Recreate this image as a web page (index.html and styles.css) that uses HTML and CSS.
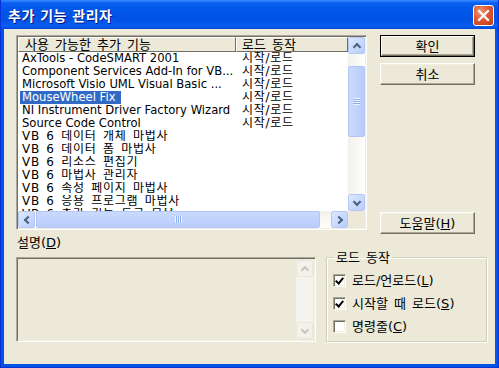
FILE: index.html
```html
<!DOCTYPE html>
<html lang="ko">
  <head>
    <meta charset="UTF-8" />
    <title>추가 기능 관리자</title>
    <link rel="stylesheet" href="styles.css">
  </head>
  <body>
    <div class="window">
      <div class="titlebar">
        <span class="title">추가 기능 관리자</span>
        <span class="close">
          <svg width="13" height="13" viewBox="0 0 13 13">
            <path d="M2 2 L11 11 M11 2 L2 11" stroke="#fff" stroke-width="2.2" stroke-linecap="square" />
          </svg>
        </span>
      </div>

      <div class="client">
        <div class="top">
          <div class="listbox">
            <div class="lv">
              <div class="lv-head">
                <div class="col c1">사용 가능한 추가 기능</div>
                <div class="col c2">로드 동작</div>
              </div>
              <div class="lv-body">
                <div class="row"><span class="c1 en">AxTools - CodeSMART 2001</span><span class="c2">시작/로드</span></div>
                <div class="row"><span class="c1 en">Component Services Add-In for VB...</span><span class="c2">시작/로드</span></div>
                <div class="row"><span class="c1 en">Microsoft Visio UML Visual Basic ...</span><span class="c2">시작/로드</span></div>
                <div class="row"><span class="c1 en"><span class="sel">MouseWheel Fix</span></span><span class="c2">시작/로드</span></div>
                <div class="row"><span class="c1 en">NI Instrument Driver Factory Wizard</span><span class="c2">시작/로드</span></div>
                <div class="row"><span class="c1 en">Source Code Control</span><span class="c2">시작/로드</span></div>
                <div class="row"><span class="c1">VB 6 데이터 개체 마법사</span></div>
                <div class="row"><span class="c1">VB 6 데이터 폼 마법사</span></div>
                <div class="row"><span class="c1">VB 6 리소스 편집기</span></div>
                <div class="row"><span class="c1">VB 6 마법사 관리자</span></div>
                <div class="row"><span class="c1">VB 6 속성 페이지 마법사</span></div>
                <div class="row"><span class="c1">VB 6 응용 프로그램 마법사</span></div>
                <div class="row"><span class="c1">VB 6 추가 기능 도구 모음</span></div>
              </div>
            </div>
            <div class="vscroll">
              <span class="sbtn up"></span>
              <span class="track">
                <span class="thumb v"><span class="grip"></span></span>
              </span>
              <span class="sbtn down"></span>
            </div>
            <div class="hscroll">
              <span class="sbtn left"></span>
              <span class="track">
                <span class="thumb h"><span class="grip"></span></span>
              </span>
              <span class="sbtn right"></span>
            </div>
            <div class="corner"></div>
          </div>

          <div class="buttons">
            <div class="btn default"><span>확인</span></div>
            <div class="btn">취소</div>
            <div class="spacer"></div>
            <div class="btn">도움말(<u>H</u>)</div>
          </div>
        </div>

        <div class="bottom">
          <div class="desc">
            <div class="desc-label">설명(<u>D</u>)</div>
            <div class="descbox">
              <div class="vscroll off">
                <span class="sbtn up"></span>
                <span class="track"></span>
                <span class="sbtn down"></span>
              </div>
            </div>
          </div>

          <fieldset class="group">
            <legend>로드 동작</legend>
            <div class="check"><span class="box on"></span><span>로드/언로드(<u>L</u>)</span></div>
            <div class="check"><span class="box on"></span><span>시작할 때 로드(<u>S</u>)</span></div>
            <div class="check"><span class="box"></span><span>명령줄(<u>C</u>)</span></div>
          </fieldset>
        </div>
      </div>
    </div>
  </body>
</html>
```

FILE: styles.css
```css
* {
    box-sizing: border-box;
}
body {
    margin: 0;
    width: 499px;
    height: 368px;
    overflow: hidden;
    font-family: "DejaVu Sans", "Noto Sans CJK KR", sans-serif;
    font-size: 13px;
    word-spacing: 2px;
    color: #000;
}
u {
    text-decoration: underline;
    text-underline-offset: 1px;
}

/* window frame */
.window {
    width: 499px;
    height: 368px;
    background: #0055e5;
    border: 1px solid #0831d9;
    border-top: none;
    padding: 0 3px 3px 3px;
    display: flex;
    flex-direction: column;
}
.titlebar {
    height: 29px;
    margin: 0 -3px;
    padding: 0 3px 0 7px;
    display: flex;
    align-items: center;
    justify-content: space-between;
    background: linear-gradient(to bottom, #3b8cff 0%, #0a5ff0 10%, #0056e8 35%, #0053e4 70%, #0a5ef2 90%, #0048d6 100%);
}
.title {
    color: #fff;
    font-family: "Noto Sans CJK KR", sans-serif;
    font-weight: bold;
    font-size: 14px;
    letter-spacing: 0.5px;
    word-spacing: 1px;
    text-shadow: 1px 1px #0a1883;
    margin-top: 1px;
}
.close {
    width: 21px;
    height: 21px;
    margin-right: 1px;
    margin-top: 1px;
    border: 1px solid #fff;
    border-radius: 3px;
    background: radial-gradient(circle at 35% 30%, #f0997a 0%, #dc5a36 45%, #c13b14 100%);
    display: flex;
    align-items: center;
    justify-content: center;
}

.client {
    flex: 1;
    background: #ece9d8;
    padding: 6px 8px 0 12px;
}

/* top area: list + buttons */
.top {
    display: flex;
    height: 195px;
}
.listbox {
    width: 351px;
    height: 195px;
    border: 1px solid;
    border-color: #aca899 #fff #fff #aca899;
    box-shadow: inset 1px 1px #716f64, inset -1px -1px #f1efe2;
    padding: 1px;
    background: #fff;
    display: grid;
    grid-template-columns: 1fr 17px;
    grid-template-rows: 1fr 17px;
}
.lv {
    overflow: hidden;
    background: #fff;
}
.lv-head {
    display: flex;
    height: 15px;
    line-height: 13px;
}
.lv-head .col {
    background: #ece9d8;
    border: 1px solid;
    border-color: #fff #716f64 #716f64 #fff;
    padding-left: 6px;
    white-space: nowrap;
    overflow: hidden;
}
.lv-head .c1 {
    width: 218px;
}
.lv-head .c2 {
    flex: 1;
    padding-left: 5px;
}
.row {
    display: flex;
    height: 13px;
    line-height: 13px;
    white-space: nowrap;
    font-size: 12px;
    letter-spacing: 0.7px;
}
.row .c1 {
    width: 218px;
    padding-left: 4px;
    overflow: hidden;
}
.row .c1.en {
    font-size: 11.6px;
    letter-spacing: 0;
    word-spacing: 0;
}
.row .c2 {
    padding-left: 6px;
}
.sel {
    background: #316ac5;
    color: #fff;
    margin-left: -2px;
    padding: 0 5px 0 2px;
    display: inline-block;
}

/* xp style scrollbars */
.vscroll,
.hscroll {
    display: flex;
    background: #fdfdfa;
}
.vscroll {
    flex-direction: column;
}
.track {
    flex: 1;
    display: flex;
    background: linear-gradient(to right, #f3f1ec, #fefefb);
}
.hscroll .track {
    background: linear-gradient(to bottom, #f3f1ec, #fefefb);
}
.sbtn {
    width: 17px;
    height: 17px;
    flex: none;
    border: 1px solid #b4c8f6;
    border-radius: 2px;
    background: linear-gradient(135deg, #dce8ff, #b9cdfb);
    position: relative;
}
.sbtn::after {
    content: "";
    position: absolute;
    width: 4px;
    height: 4px;
    left: 5px;
    top: 5px;
    border: solid #4d6185;
    border-width: 2px 2px 0 0;
}
.sbtn.up::after {
    transform: rotate(-45deg);
    top: 6px;
}
.sbtn.down::after {
    transform: rotate(135deg);
    top: 4px;
}
.sbtn.left::after {
    transform: rotate(-135deg);
    left: 6px;
}
.sbtn.right::after {
    transform: rotate(45deg);
    left: 4px;
}
.thumb {
    border: 1px solid #b1c6f5;
    border-radius: 2px;
    background: linear-gradient(to right, #cad9fd, #b9cdfb);
    display: flex;
    align-items: center;
    justify-content: center;
}
.thumb.v {
    width: 17px;
    height: 71px;
    margin-top: 12px;
}
.thumb.h {
    height: 17px;
    width: 284px;
    margin-left: 1px;
    background: linear-gradient(to bottom, #cad9fd, #b9cdfb);
}
.thumb.v .grip {
    width: 7px;
    height: 7px;
    background: repeating-linear-gradient(to bottom, #eef4fe 0 1px, #8caef0 1px 2px);
}
.thumb.h .grip {
    width: 7px;
    height: 7px;
    background: repeating-linear-gradient(to right, #eef4fe 0 1px, #8caef0 1px 2px);
}
.corner {
    background: #ece9d8;
}

/* buttons */
.buttons {
    margin-left: 13px;
    width: 95px;
    display: flex;
    flex-direction: column;
    gap: 6px;
}
.spacer {
    flex: 1;
}
.btn {
    height: 22px;
    background: #ece9d8;
    border: 1px solid;
    border-color: #fff #716f64 #716f64 #fff;
    box-shadow: inset -1px -1px #aca899, inset 1px 1px #f1efe2;
    display: flex;
    align-items: center;
    justify-content: center;
    line-height: 13px;
}
.btn.default {
    border: 1px solid #000;
    box-shadow: none;
    padding: 0;
}
.btn.default span {
    width: 100%;
    height: 100%;
    border: 1px solid;
    border-color: #fff #716f64 #716f64 #fff;
    box-shadow: inset -1px -1px #aca899;
    display: flex;
    align-items: center;
    justify-content: center;
}
.buttons .btn:last-child {
    margin-bottom: -4px;
}

/* bottom area */
.bottom {
    display: flex;
    margin-top: 6px;
}
.desc {
    width: 300px;
}
.desc-label {
    height: 13px;
    line-height: 13px;
    padding-left: 1px;
    margin-bottom: 8px;
}
.descbox {
    height: 85px;
    border: 1px solid;
    border-color: #aca899 #fff #fff #aca899;
    box-shadow: inset 1px 1px #716f64, inset -1px -1px #f1efe2;
    padding: 2px 2px 2px 0;
    display: flex;
    justify-content: flex-end;
}
.vscroll.off {
    width: 17px;
    background: #f7f6f1;
}
.vscroll.off .track {
    background: #f4f3ee;
}
.vscroll.off .sbtn {
    border-color: #e8e6dd;
    background: #f3f1ec;
}
.vscroll.off .sbtn::after {
    border-color: #c9c7ba;
}

.group {
    margin: 15px 0 0 10px;
    padding: 5px 6px 0 6px;
    width: 161px;
    height: 91px;
    border: 1px solid #d0d0bf;
    box-shadow: 1px 1px #fff, inset 1px 1px #fff;
}
.group legend {
    padding: 0 2px;
    margin-left: 1px;
    line-height: 13px;
}
.check {
    display: flex;
    align-items: center;
    gap: 6px;
    height: 23px;
    line-height: 13px;
}
.box {
    width: 13px;
    height: 13px;
    flex: none;
    background: #fff;
    border: 1px solid;
    border-color: #aca899 #fff #fff #aca899;
    box-shadow: inset 1px 1px #716f64, inset -1px -1px #f1efe2;
    position: relative;
}
.box.on::after {
    content: "";
    position: absolute;
    left: 3px;
    top: 1px;
    width: 3px;
    height: 6px;
    border: solid #000;
    border-width: 0 2px 2px 0;
    transform: rotate(40deg);
}
```
